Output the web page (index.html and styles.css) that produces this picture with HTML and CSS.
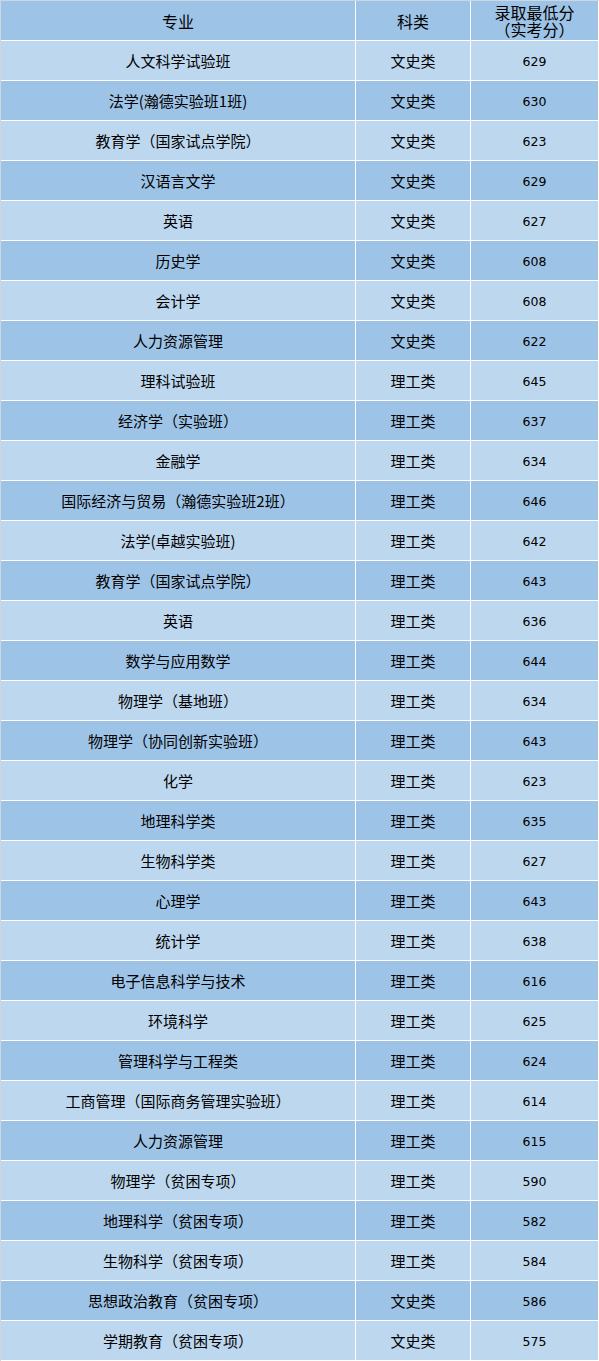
FILE: index.html
```html
<!DOCTYPE html>
<html lang="zh">
<head>
<meta charset="utf-8">
<title>录取最低分</title>
<link rel="stylesheet" href="styles.css">
</head>
<body>
<table class="scores">
  <colgroup><col class="c-major"><col class="c-type"><col class="c-score"></colgroup>
  <thead>
    <tr><th>专业</th><th>科类</th><th class="two-line"><span class="line">录取最低分</span><span class="line">（实考分）</span></th></tr>
  </thead>
  <tbody>
    <tr><td>人文科学试验班</td><td>文史类</td><td class="num">629</td></tr>
    <tr><td>法学(瀚德实验班1班)</td><td>文史类</td><td class="num">630</td></tr>
    <tr><td>教育学（国家试点学院）</td><td>文史类</td><td class="num">623</td></tr>
    <tr><td>汉语言文学</td><td>文史类</td><td class="num">629</td></tr>
    <tr><td>英语</td><td>文史类</td><td class="num">627</td></tr>
    <tr><td>历史学</td><td>文史类</td><td class="num">608</td></tr>
    <tr><td>会计学</td><td>文史类</td><td class="num">608</td></tr>
    <tr><td>人力资源管理</td><td>文史类</td><td class="num">622</td></tr>
    <tr><td>理科试验班</td><td>理工类</td><td class="num">645</td></tr>
    <tr><td>经济学（实验班）</td><td>理工类</td><td class="num">637</td></tr>
    <tr><td>金融学</td><td>理工类</td><td class="num">634</td></tr>
    <tr><td>国际经济与贸易（瀚德实验班2班）</td><td>理工类</td><td class="num">646</td></tr>
    <tr><td>法学(卓越实验班)</td><td>理工类</td><td class="num">642</td></tr>
    <tr><td>教育学（国家试点学院）</td><td>理工类</td><td class="num">643</td></tr>
    <tr><td>英语</td><td>理工类</td><td class="num">636</td></tr>
    <tr><td>数学与应用数学</td><td>理工类</td><td class="num">644</td></tr>
    <tr><td>物理学（基地班）</td><td>理工类</td><td class="num">634</td></tr>
    <tr><td>物理学（协同创新实验班）</td><td>理工类</td><td class="num">643</td></tr>
    <tr><td>化学</td><td>理工类</td><td class="num">623</td></tr>
    <tr><td>地理科学类</td><td>理工类</td><td class="num">635</td></tr>
    <tr><td>生物科学类</td><td>理工类</td><td class="num">627</td></tr>
    <tr><td>心理学</td><td>理工类</td><td class="num">643</td></tr>
    <tr><td>统计学</td><td>理工类</td><td class="num">638</td></tr>
    <tr><td>电子信息科学与技术</td><td>理工类</td><td class="num">616</td></tr>
    <tr><td>环境科学</td><td>理工类</td><td class="num">625</td></tr>
    <tr><td>管理科学与工程类</td><td>理工类</td><td class="num">624</td></tr>
    <tr><td>工商管理（国际商务管理实验班）</td><td>理工类</td><td class="num">614</td></tr>
    <tr><td>人力资源管理</td><td>理工类</td><td class="num">615</td></tr>
    <tr><td>物理学（贫困专项）</td><td>理工类</td><td class="num">590</td></tr>
    <tr><td>地理科学（贫困专项）</td><td>理工类</td><td class="num">582</td></tr>
    <tr><td>生物科学（贫困专项）</td><td>理工类</td><td class="num">584</td></tr>
    <tr><td>思想政治教育（贫困专项）</td><td>文史类</td><td class="num">586</td></tr>
    <tr><td>学期教育（贫困专项）</td><td>文史类</td><td class="num">575</td></tr>
  </tbody>
</table>
</body>
</html>
```
FILE: styles.css
```css
html, body {
  margin: 0;
  padding: 0;
  background: #ffffff;
}

.scores {
  border-collapse: separate;
  border-spacing: 0;
  table-layout: fixed;
  width: 599px;
  border-top: 1px solid #cfd6de;
  border-left: 1px solid #cfd6de;
  font-family: "Noto Sans CJK SC", "Noto Sans", sans-serif;
  color: #000000;
}

.c-major { width: 355px; }
.c-type { width: 115px; }
.c-score { width: 128px; }

.scores th,
.scores td {
  height: 39px;
  padding: 0;
  text-align: center;
  vertical-align: middle;
  border-right: 1px solid #ffffff;
  border-bottom: 1px solid #ffffff;
  box-sizing: content-box;
  white-space: nowrap;
  overflow: hidden;
}

.scores th {
  background: #9dc3e6;
  font-weight: normal;
  font-size: 16px;
  line-height: 18px;
}

.two-line .line {
  display: block;
  height: 17px;
  line-height: 17px;
}

.scores td {
  font-size: 15px;
  line-height: 18px;
}

.scores td.num {
  font-family: "DejaVu Sans", sans-serif;
  font-size: 12.5px;
  padding-top: 2px;
  height: 37px;
}

.scores tbody tr:nth-child(odd) td {
  background: #bdd7ee;
}

.scores tbody tr:nth-child(even) td {
  background: #9dc3e6;
}
```
